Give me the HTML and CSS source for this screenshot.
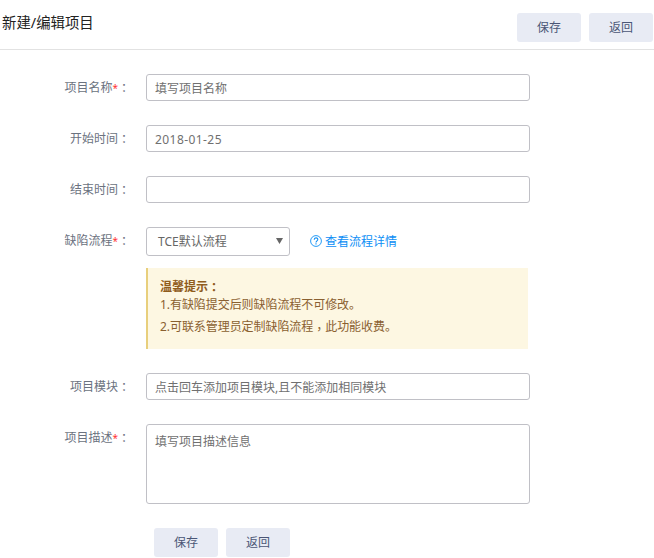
FILE: index.html
```html
<!DOCTYPE html>
<html lang="zh-CN">
<head>
<meta charset="utf-8">
<title>新建/编辑项目</title>
<link rel="stylesheet" href="styles.css">
</head>
<body>
<header class="header">
  <h1 class="title">新建/编辑项目</h1>
  <div class="actions">
    <button class="btn" type="button">保存</button>
    <button class="btn" type="button">返回</button>
  </div>
</header>
<form class="form">
  <div class="row">
    <label class="label">项目名称<span class="required">*</span><span class="punct" lang="zh-TW">：</span></label>
    <input class="field" type="text" placeholder="填写项目名称">
  </div>
  <div class="row">
    <label class="label">开始时间<span class="punct" lang="zh-TW">：</span></label>
    <input class="field date" type="text" placeholder="2018-01-25">
  </div>
  <div class="row">
    <label class="label">结束时间<span class="punct" lang="zh-TW">：</span></label>
    <input class="field" type="text">
  </div>
  <div class="row">
    <label class="label">缺陷流程<span class="required">*</span><span class="punct" lang="zh-TW">：</span></label>
    <div class="content">
      <div class="process">
        <div class="select"><span>TCE默认流程</span><svg class="arrow" width="7" height="6" viewBox="0 0 7 6"><path d="M0 0h7L3.5 6z" fill="#666"/></svg></div>
        <a class="link"><svg width="12" height="12" viewBox="0 0 12 12" fill="none" stroke="currentColor"><circle cx="6" cy="6" r="5.4" stroke-width=".9"/><path d="M4.2 4.7C4.2 2.3 7.8 2.3 7.8 4.5C7.8 5.8 6 5.9 6 7.5M6 8.3v1.1" stroke-width="1.1"/></svg><span>查看流程详情</span></a>
      </div>
      <div class="notice">
        <strong class="notice-title">温馨提示<span class="punct" lang="zh-TW">：</span></strong>
        <p class="notice-line">1.有缺陷提交后则缺陷流程不可修改。</p>
        <p class="notice-line">2.可联系管理员定制缺陷流程<span class="punct comma" lang="zh-TW">，</span>此功能收费。</p>
      </div>
    </div>
  </div>
  <div class="row">
    <label class="label">项目模块<span class="punct" lang="zh-TW">：</span></label>
    <input class="field" type="text" placeholder="点击回车添加项目模块,且不能添加相同模块">
  </div>
  <div class="row">
    <label class="label">项目描述<span class="required">*</span><span class="punct" lang="zh-TW">：</span></label>
    <textarea class="field area" placeholder="填写项目描述信息"></textarea>
  </div>
  <div class="actions footer">
    <button class="btn" type="button">保存</button>
    <button class="btn" type="button">返回</button>
  </div>
</form>
</body>
</html>
```
FILE: styles.css
```css
* {
  box-sizing: border-box;
}

body,
button,
input,
textarea {
  margin: 0;
  font: 12px/18px "Noto Sans", "Noto Sans CJK SC", sans-serif;
}

body {
  background: #fff;
  color: #666;
  overflow: hidden;
}

.header {
  display: flex;
  justify-content: space-between;
  height: 50px;
  padding: 13px 1px 0 2px;
  border-bottom: 1px solid #e2e2e2;
}

.title {
  margin: 0;
  font-size: 14.4px;
  line-height: 20px;
  font-weight: 400;
  color: #222;
}

.actions {
  display: flex;
  gap: 8px;
}

.btn {
  width: 64px;
  height: 29px;
  padding: 0;
  border: 0;
  border-radius: 3px;
  background: #e8ebf4;
  color: #4a5676;
}

.form {
  display: flex;
  flex-direction: column;
  gap: 24px;
  padding-top: 24px;
}

.row {
  display: flex;
  align-items: flex-start;
}

.label {
  width: 130px;
  margin-right: 16px;
  padding-top: 5px;
  text-align: right;
  color: #6b7280;
  white-space: nowrap;
}

.required {
  font-size: 10px;
  line-height: 1;
  color: #f33;
}

.punct {
  font-family: "Noto Sans CJK TC", sans-serif;
  line-height: 1;
  vertical-align: -1px;
}

.comma {
  vertical-align: -3px;
}

.field {
  width: 384px;
  height: 27px;
  padding: 2px 8px 0;
  border: 1px solid #c0c0c6;
  border-radius: 3px;
  background: #fff;
  color: #666;
}

.field::placeholder {
  color: #707070;
  opacity: 1;
}

.date {
  letter-spacing: .43px;
}

.area {
  display: block;
  height: 80px;
  padding-top: 8px;
  resize: none;
}

.process {
  display: flex;
  align-items: center;
  gap: 20px;
}

.select {
  display: flex;
  align-items: center;
  justify-content: space-between;
  width: 144px;
  height: 29px;
  padding: 0 6px 0 11px;
  border: 1px solid #c0c0c6;
  border-radius: 3px;
}

.arrow {
  margin-bottom: 2px;
}

.link {
  display: flex;
  align-items: center;
  gap: 3px;
  color: #0c8ef5;
}

.link svg {
  margin-bottom: 1px;
}

.notice {
  width: 382px;
  height: 81px;
  margin-top: 12px;
  padding: 10px 12px 0;
  border-left: 2px solid #e8cf7c;
  background: #fdf7e2;
  color: #8a6030;
}

.notice-title {
  display: block;
  height: 16px;
  color: #8f5c1c;
}

.notice-line {
  margin: 0;
  height: 22px;
  line-height: 22px;
  letter-spacing: -.06px;
}

.footer {
  padding-left: 154px;
}
```
